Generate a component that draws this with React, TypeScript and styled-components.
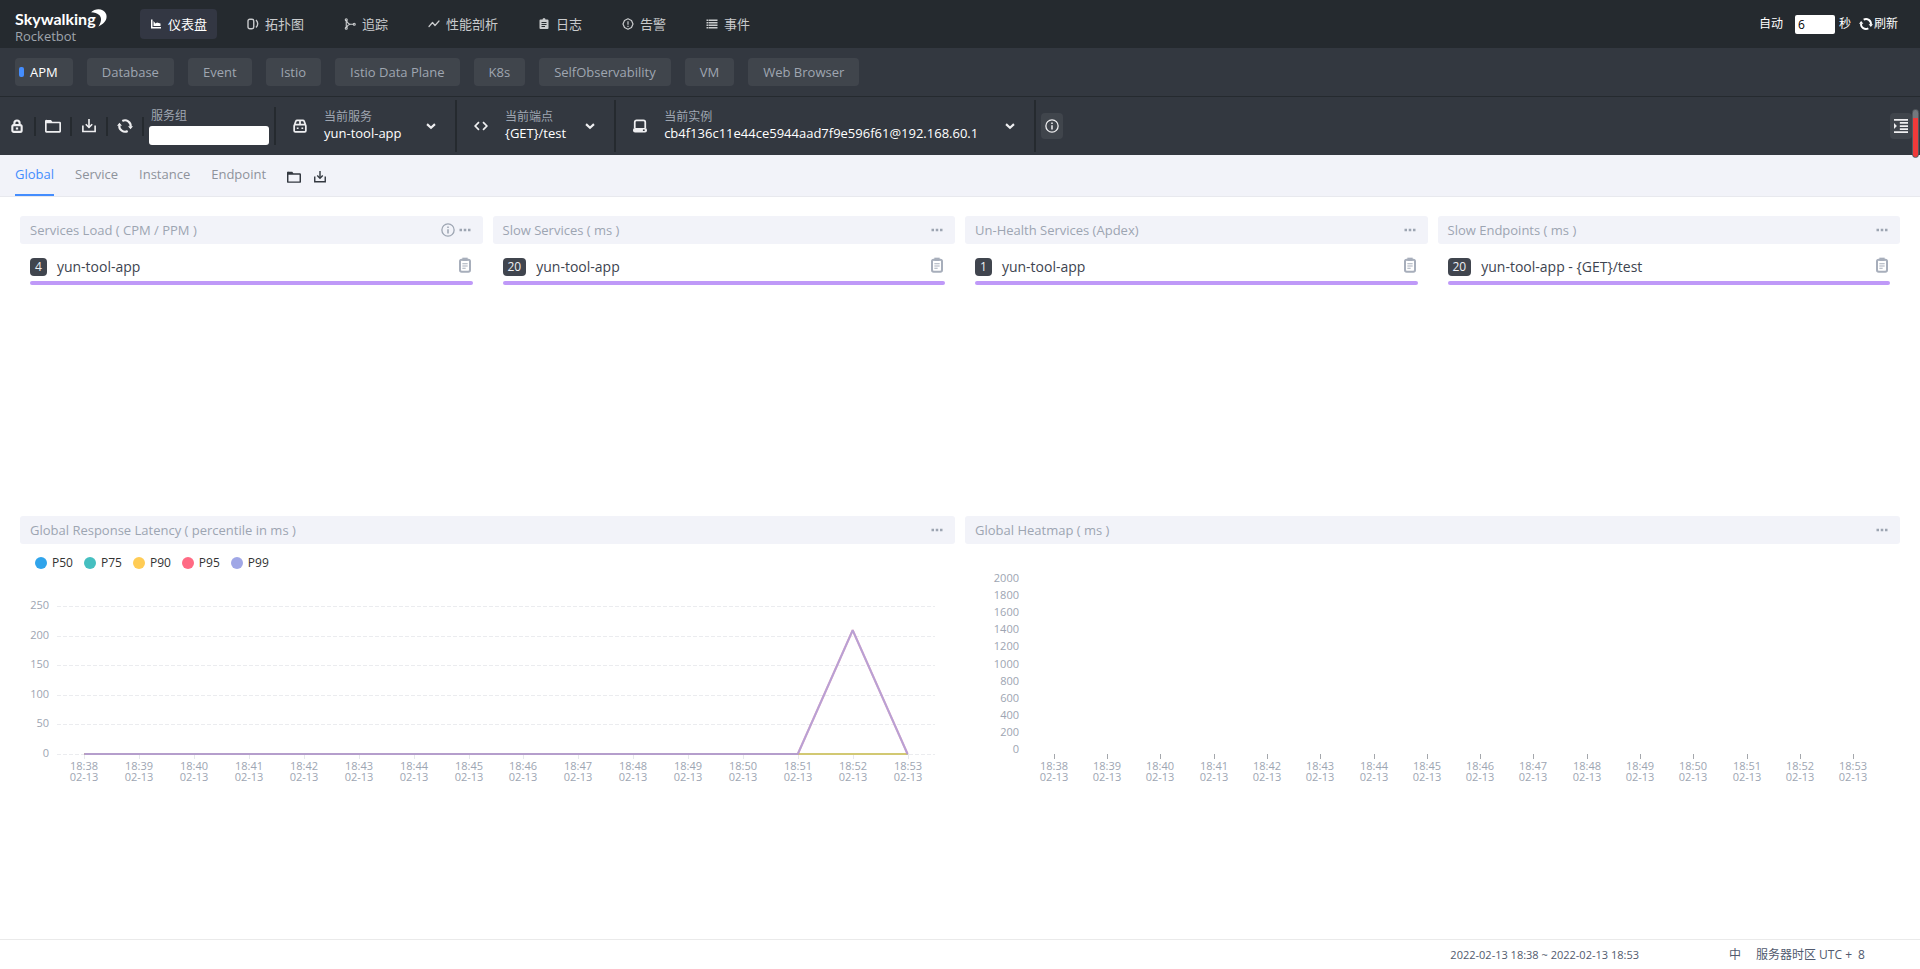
import React, { useLayoutEffect, useRef, useState } from 'react';
import styled, { createGlobalStyle } from 'styled-components';

const GlobalStyle = createGlobalStyle`
  *, *::before, *::after { box-sizing: border-box; }
  body {
    margin: 0;
    background: #fff;
    color: #3d444f;
    font-family: 'Open Sans', 'Noto Sans CJK SC', sans-serif;
    font-size: 13px;
    line-height: 18px;
  }
  button, input { font: inherit; color: inherit; }
  button { border: 0; padding: 0; background: none; cursor: pointer; }
  a { color: inherit; text-decoration: none; }
  svg { display: block; flex: none; }
`;

const Page = styled.div`
  display: flex;
  flex-direction: column;
  min-height: 100vh;
`;

/* ---------- icons ---------- */

type IconName =
  | 'chart' | 'topology' | 'trace' | 'timeline' | 'clipboard' | 'issue' | 'list'
  | 'lock' | 'folder' | 'save' | 'retry' | 'package' | 'code' | 'disk'
  | 'chevron' | 'info' | 'indent' | 'clipboardOutline' | 'more';

const shapes: Record<IconName, React.ReactNode> = {
  chart: <path d="M2 3h3v15h17v3H2zM7 16V6l4 5 3-2 7 2v5z" fill="currentColor" />,
  topology: (
    <g fill="none" stroke="currentColor" strokeWidth="2.8">
      <rect x="2" y="2.500" width="11.500" height="19" rx="3.500" />
      <path d="M18 4c4.500 4 4.500 10.500 0 15" />
    </g>
  ),
  trace: (
    <g fill="none" stroke="currentColor" strokeWidth="2.2">
      <path d="M4.500 4v16M5 5c2 5 4 7.500 8 7.500h6M13 12.500c-4 0-6 2-8 6.500" />
      <circle cx="4.500" cy="3.500" r="2" />
      <circle cx="4.500" cy="20.500" r="2" />
      <circle cx="20.500" cy="12.500" r="2" />
    </g>
  ),
  timeline: (
    <path
      d="M2 17l7-8 5 6 8-9"
      fill="none"
      stroke="currentColor"
      strokeWidth="2.400"
      strokeLinejoin="round"
      strokeLinecap="round"
    />
  ),
  clipboard: (
    <path
      fill="currentColor"
      fillRule="evenodd"
      d="M19 3h-4a3 3 0 0 0-6 0H5a2 2 0 0 0-2 2v15a2 2 0 0 0 2 2h14a2 2 0 0 0 2-2V5a2 2 0 0 0-2-2zM7 8h10v2H7zm0 4h10v2H7zm0 4h7v2H7z"
    />
  ),
  issue: (
    <g fill="none" stroke="currentColor" strokeWidth="2.400">
      <path d="M12 1.500l7 3.500 3 7-3 7-7 3.500L5 19l-3-7 3-7z" strokeLinejoin="round" />
      <path d="M12 6.500v7M12 15.500v2.500" />
    </g>
  ),
  list: <path fill="currentColor" d="M1 3h3v3H1zm4 0h18v3H5zM1 8h3v3H1zm4 0h18v3H5zM1 13h3v3H1zm4 0h18v3H5zM1 18h3v3H1zm4 0h18v3H5z" />,
  lock: (
    <g fill="none" stroke="currentColor" strokeWidth="3.600">
      <rect x="4" y="10.500" width="16" height="11.500" rx="2.500" />
      <path d="M7.500 10.500V7a4.500 4.500 0 0 1 9 0v3.500" />
      <path d="M10 16.300h4" />
    </g>
  ),
  folder: (
    <path
      fill="currentColor"
      fillRule="evenodd"
      d="M3 3h6l2 2.500h11a2 2 0 0 1 2 2V20a2 2 0 0 1-2 2H2a2 2 0 0 1-2-2V5a2 2 0 0 1 3-2zM2.500 8v11.500h19V8z"
    />
  ),
  save: (
    <g fill="none" stroke="currentColor" strokeWidth="2.800">
      <path d="M1.500 11v10.500h21V11" />
      <path d="M12 0v14" />
      <path d="M6.500 9l5.500 5.500L17.500 9" />
    </g>
  ),
  retry: (
    <g fill="none" stroke="currentColor" strokeWidth="3.200">
      <path d="M8 4.500A8.500 8.500 0 0 1 20.500 13M16 19.500A8.500 8.500 0 0 1 3.500 11" />
      <path d="M16.500 12.500H24L20.300 17zM0 11.500h7.500L3.700 7z" fill="currentColor" stroke="none" />
    </g>
  ),
  package: (
    <g fill="none" stroke="currentColor" strokeWidth="3">
      <rect x="2" y="9.500" width="20" height="12.500" rx="2" />
      <path d="M3 9l2-5.500Q5.500 2.500 7 2.500h10q1.500 0 2 1L21 9M12 2v7M8 14.500V17M16 14.500V17" />
    </g>
  ),
  code: <path d="M8.500 5.500L2 12l6.500 6.500M15.500 5.500L22 12l-6.500 6.500" fill="none" stroke="currentColor" strokeWidth="3" />,
  disk: (
    <g fill="none" stroke="currentColor" strokeWidth="3">
      <path d="M3 16V5.500a3 3 0 0 1 3-3h12a3 3 0 0 1 3 3V16" />
      <path
        fill="currentColor"
        stroke="none"
        fillRule="evenodd"
        d="M3.500 15.500h17A3.500 3.500 0 0 1 24 19v.5a3.500 3.500 0 0 1-3.500 3.500h-17A3.500 3.500 0 0 1 0 19.500V19a3.500 3.500 0 0 1 3.500-3.500zM17 18v2.500h3V18z"
      />
    </g>
  ),
  chevron: <path d="M2.500 7.500L12 16.500l9.500-9" fill="none" stroke="currentColor" strokeWidth="5" />,
  info: (
    <g fill="none" stroke="currentColor" strokeWidth="2.200">
      <circle cx="12" cy="12" r="10.500" />
      <path d="M12 10.500V18M12 6v2.500" strokeWidth="2.600" />
    </g>
  ),
  indent: <path fill="currentColor" d="M0 0h24v3H0zM10 5.200h14v3H10zM10 10.500h14v3H10zM10 15.800h14v3H10zM0 21h24v3H0zM0 7l5 5-5 5z" />,
  clipboardOutline: (
    <g fill="none" stroke="currentColor">
      <rect x="4.500" y="4" width="15" height="18" rx="2.500" strokeWidth="3" />
      <path d="M8 1h8v5H8z" fill="currentColor" stroke="none" />
      <path d="M8 10h8M8 13.500h8M8 17h5" strokeWidth="1.600" />
    </g>
  ),
  more: <path fill="currentColor" d="M1 9.500h5v5H1zM9.500 9.500h5v5h-5zM18 9.500h5v5h-5z" />,
};

const Icon = ({ name, size = 14 }: { name: IconName; size?: number }) => (
  <svg width={size} height={size} viewBox="0 0 24 24" aria-hidden="true">
    {shapes[name]}
  </svg>
);

/* ---------- header ---------- */

const Header = styled.header`
  display: flex;
  align-items: center;
  height: 48px;
  padding: 0 22px 0 15px;
  background: #252a2f;
  color: #c9cbcd;
`;

const Logo = styled.a`
  display: flex;
  flex-direction: column;
  width: 125px;
  padding-top: 4px;
  color: #9fa5ad;
  line-height: 14px;
`;

const LogoMark = styled.span`
  display: flex;
  align-items: flex-start;
  height: 20px;
  color: #fff;
  font: 700 16px/20px Lato, sans-serif;

  svg { margin-left: -5px; }
`;

const Nav = styled.nav`
  display: flex;
  gap: 20px;
`;

const NavLink = styled.a<{ $active?: boolean }>`
  display: flex;
  align-items: center;
  gap: 6px;
  height: 30px;
  padding: 0 10px;
  border-radius: 4px;
  background: ${(p) => (p.$active ? '#333743' : 'transparent')};
  color: ${(p) => (p.$active ? '#fff' : 'inherit')};
`;

const AutoRefresh = styled.div`
  display: flex;
  align-items: center;
  margin-left: auto;
  color: #fff;
  font-size: 12px;
`;

const SecondsInput = styled.input`
  width: 40px;
  height: 19px;
  margin: 0 4px 0 12px;
  padding: 0 3px;
  border: 0;
  border-radius: 2px;
  background: #fff;
  color: #000;
`;

const RefreshButton = styled.button`
  display: flex;
  align-items: center;
  gap: 1px;
  margin-left: 8px;
`;

const navItems: { icon: IconName; label: string }[] = [
  { icon: 'chart', label: '仪表盘' },
  { icon: 'topology', label: '拓扑图' },
  { icon: 'trace', label: '追踪' },
  { icon: 'timeline', label: '性能剖析' },
  { icon: 'clipboard', label: '日志' },
  { icon: 'issue', label: '告警' },
  { icon: 'list', label: '事件' },
];

/* ---------- template groups ---------- */

const GroupBar = styled.div`
  display: flex;
  align-items: center;
  gap: 14px;
  height: 49px;
  padding: 0 15px;
  border-bottom: 1px solid #252a2f;
  background: #333840;
`;

const GroupButton = styled.button<{ $active?: boolean }>`
  position: relative;
  height: 28px;
  padding: 0 15px;
  border-radius: 4px;
  background: #40454c;
  color: ${(p) => (p.$active ? '#fff' : '#9fa6b1')};
  ${(p) =>
    p.$active &&
    `&::before {
      content: '';
      position: absolute;
      left: 4px;
      top: 9px;
      width: 5px;
      height: 10px;
      border-radius: 2px;
      background: #448dfe;
    }`}
`;

const groups = ['APM', 'Database', 'Event', 'Istio', 'Istio Data Plane', 'K8s', 'SelfObservability', 'VM', 'Web Browser'];

/* ---------- tool bar ---------- */

const ToolBar = styled.div`
  position: relative;
  display: flex;
  align-items: center;
  height: 58px;
  background: #333840;
  color: #efeff1;
`;

const ToolButton = styled.button`
  display: flex;
  align-items: center;
  justify-content: center;
  width: 36px;
  height: 19px;
  border-right: 2px solid #252a2f;
`;

const GroupField = styled.label`
  display: flex;
  flex-direction: column;
  gap: 1px;
  height: 38px;
  padding: 0 5px;
  border-right: 2px solid #252a2f;
  color: #9fa6b1;
  font-size: 12px;
  line-height: 18px;

  span { padding-left: 2px; }
`;

const GroupInput = styled.input`
  width: 120px;
  height: 20px;
  padding: 0 4px;
  border: 0;
  border-radius: 3px;
  background: #fff;
  color: #333;
`;

const Selector = styled.button`
  display: flex;
  align-items: center;
  height: 52px;
  padding: 0 19px 0 17px;
  border-right: 2px solid #252a2f;
  text-align: left;
`;

const SelectorText = styled.span<{ $min: number }>`
  display: flex;
  flex-direction: column;
  min-width: ${(p) => p.$min}px;
  margin: 0 19px 3px 17px;
  color: #fff;
  line-height: 16px;

  small {
    color: #9fa6b1;
    font-size: 12px;
  }
`;

const ToolChip = styled.button<{ $end?: boolean }>`
  display: flex;
  align-items: center;
  justify-content: center;
  width: 22px;
  height: 26px;
  border-radius: 4px;
  background: #40454c;
  margin-left: ${(p) => (p.$end ? 'auto' : '5px')};
  margin-right: ${(p) => (p.$end ? '8px' : '0')};
`;

const ScrollMark = styled.div`
  position: absolute;
  right: 1px;
  top: 12px;
  width: 7px;
  height: 49px;
  border: 1px solid #55595f;
  border-radius: 4px;
  background: linear-gradient(#74787e 8px, #f03a3a 8px);
`;

const selectors: { icon: IconName; label: string; value: string; min: number }[] = [
  { icon: 'package', label: '当前服务', value: 'yun-tool-app', min: 83 },
  { icon: 'code', label: '当前端点', value: '{GET}/test', min: 61 },
  { icon: 'disk', label: '当前实例', value: 'cb4f136c11e44ce5944aad7f9e596f61@192.168.60.1', min: 322 },
];

/* ---------- scope tabs ---------- */

const TabBar = styled.div`
  display: flex;
  align-items: center;
  gap: 21px;
  height: 42px;
  padding: 0 15px;
  border-bottom: 1px solid #e8e9ee;
  background: #f2f3f9;
  color: #333840;
`;

const Tab = styled.button<{ $active?: boolean }>`
  height: 41px;
  padding-bottom: 2px;
  border-bottom: 2px solid ${(p) => (p.$active ? '#448dfe' : 'transparent')};
  color: ${(p) => (p.$active ? '#448dfe' : '#8e929b')};
`;

const TabTools = styled.div`
  display: flex;
  gap: 13px;
  padding-top: 2px;
`;

/* ---------- dashboard ---------- */

const Dashboard = styled.main`
  flex: 1;
  display: grid;
  grid-template-columns: repeat(4, minmax(0, 1fr));
  grid-template-rows: 290px 290px;
  gap: 10px;
  padding: 19px 20px 0;
`;

const Panel = styled.section<{ $span?: number }>`
  display: flex;
  flex-direction: column;
  grid-column: span ${(p) => p.$span ?? 1};
`;

const PanelHead = styled.div`
  display: flex;
  align-items: center;
  gap: 4px;
  height: 28px;
  padding: 0 12px 0 10px;
  border-radius: 3px;
  background: #f2f3f9;
  color: #9da5b2;

  h2 {
    flex: 1;
    margin: 0;
    font-size: 13px;
    font-weight: 400;
  }
`;

const RankItem = styled.div`
  display: flex;
  align-items: center;
  gap: 10px;
  height: 28px;
  margin: 9px 10px 0;
`;

const Badge = styled.span`
  padding: 0 5px;
  border-radius: 4px;
  background: #40454e;
  color: #eef0f4;
  font-size: 12px;
`;

const RankName = styled.span`
  flex: 1;
  font-size: 14px;
`;

const CopyButton = styled.button`
  padding-bottom: 4px;
  color: #a7aebb;
`;

const Bar = styled.div`
  height: 4px;
  margin: 0 10px;
  border-radius: 2px;
  background: #bf99f8;
`;

type Rank = { title: string; value: string; name: string; info?: boolean };

const ranks: Rank[] = [
  { title: 'Services Load ( CPM / PPM )', value: '4', name: 'yun-tool-app', info: true },
  { title: 'Slow Services ( ms )', value: '20', name: 'yun-tool-app' },
  { title: 'Un-Health Services (Apdex)', value: '1', name: 'yun-tool-app' },
  { title: 'Slow Endpoints ( ms )', value: '20', name: 'yun-tool-app - {GET}/test' },
];

const PanelHeading = ({ title, info }: { title: string; info?: boolean }) => (
  <PanelHead>
    <h2>{title}</h2>
    {info && <button aria-label="Details"><Icon name="info" /></button>}
    <button aria-label="More"><Icon name="more" size={12} /></button>
  </PanelHead>
);

/* ---------- charts ---------- */

const Legend = styled.ul`
  display: flex;
  gap: 11px;
  height: 24px;
  margin: 7px 0 0;
  padding: 0 15px;
  list-style: none;
  color: #333;
  font-size: 12px;
  line-height: 24px;
`;

const LegendItem = styled.li<{ $color: string }>`
  display: flex;
  align-items: center;
  gap: 5px;

  &::before {
    content: '';
    width: 12px;
    height: 12px;
    border-radius: 50%;
    background: ${(p) => p.$color};
  }
`;

const Plot = styled.div<{ $tall?: boolean }>`
  height: ${(p) => (p.$tall ? '252px' : '221px')};

  svg { width: 100%; height: 100%; }
  text {
    fill: #9da5b2;
    font-size: 11px;
  }
`;

const minutes = Array.from({ length: 16 }, (_, i) => `18:${38 + i}`);

const usePlotWidth = () => {
  const ref = useRef<HTMLDivElement>(null);
  const [width, setWidth] = useState(935);
  useLayoutEffect(() => {
    const node = ref.current;
    if (!node) return;
    const measure = () => setWidth(node.clientWidth);
    measure();
    const observer = new ResizeObserver(measure);
    observer.observe(node);
    return () => observer.disconnect();
  }, []);
  return { ref, width };
};

const TimeAxis = ({ left, right, y, color }: { left: number; right: number; y: number; color: string }) => {
  const step = (right - left) / minutes.length;
  return (
    <g textAnchor="middle">
      {minutes.map((m, i) => {
        const x = Math.round(left + step * (i + 0.5));
        return (
          <g key={m}>
            <path d={`M${x + 0.5} ${y}v5`} stroke={color} />
            <text x={x} y={y + 16}>{m}</text>
            <text x={x} y={y + 27}>02-13</text>
          </g>
        );
      })}
    </g>
  );
};

const series = [
  { name: 'P50', color: '#30a4eb', peak: 0 },
  { name: 'P75', color: '#45bfc0', peak: 0 },
  { name: 'P90', color: '#ffcc55', peak: 0 },
  { name: 'P95', color: '#ff6a84', peak: 209 },
  { name: 'P99', color: '#a0a7e6', peak: 209 },
];

const LatencyChart = () => {
  const { ref, width } = usePlotWidth();
  const left = 37;
  const right = width - 20;
  const top = 31;
  const base = 179;
  const step = (right - left) / minutes.length;
  const yOf = (v: number) => base - (v / 250) * (base - top);
  return (
    <>
      <Legend>
        {series.map((s) => (
          <LegendItem key={s.name} $color={s.color}>{s.name}</LegendItem>
        ))}
      </Legend>
      <Plot ref={ref}>
        <svg role="img" aria-label="Global response latency">
          {[0, 50, 100, 150, 200, 250].map((v) => (
            <g key={v}>
              <path d={`M${left} ${Math.round(yOf(v)) + 0.5}H${right}`} stroke="#ebecef" strokeDasharray="4 2" />
              <text x={left - 8} y={Math.round(yOf(v)) + 3} textAnchor="end">{v}</text>
            </g>
          ))}
          <TimeAxis left={left} right={right} y={base} color="#e6e8ec" />
          {series.map((s) => (
            <polyline
              key={s.name}
              fill="none"
              stroke={s.color}
              strokeWidth="2"
              strokeOpacity="0.75"
              strokeLinejoin="bevel"
              points={minutes.map((_, i) => `${left + step * (i + 0.5)},${yOf(i === 14 ? s.peak : 0)}`).join(' ')}
            />
          ))}
        </svg>
      </Plot>
    </>
  );
};

const HeatmapChart = () => {
  const { ref, width } = usePlotWidth();
  const base = 210;
  return (
    <Plot ref={ref} $tall>
      <svg role="img" aria-label="Global heatmap">
        {Array.from({ length: 11 }, (_, i) => (
          <text key={i} x={54} y={Math.round(209 - i * 17.1)} textAnchor="end">{i * 200}</text>
        ))}
        <TimeAxis left={62} right={width - 20} y={base} color="#a4a7ac" />
      </svg>
    </Plot>
  );
};

/* ---------- footer ---------- */

const Footer = styled.footer`
  display: flex;
  align-items: center;
  justify-content: flex-end;
  height: 30px;
  padding-right: 53px;
  border-top: 1px solid #eaeaea;
  color: #515a6e;
  font-size: 12px;
`;

const TimeRange = styled.button`
  margin-right: 90px;
  font-size: 11px;
`;

const Language = styled.button`
  margin-right: 15px;
`;

const Offset = styled.input`
  width: 9px;
  padding: 0;
  border: 0;
  background: none;
`;

const Zone = styled.label`
  display: flex;
  gap: 6px;
`;

export default function App() {
  return (
    <Page>
      <GlobalStyle />
      <Header>
        <Logo href="#">
          <LogoMark>
            Skywalking
            <svg width="16" height="18" viewBox="0 0 15 17" aria-hidden="true">
              <path d="M0 3C4-1 12-1 14.300 5c1.500 5-2 9-7.300 11.500C10 12 10 8.500 8 6 6 3.800 3 3.200 0 3z" fill="#fff" />
            </svg>
          </LogoMark>
          Rocketbot
        </Logo>
        <Nav>
          {navItems.map((n, i) => (
            <NavLink key={n.label} href="#" $active={i === 0}>
              <Icon name={n.icon} size={12} />
              {n.label}
            </NavLink>
          ))}
        </Nav>
        <AutoRefresh>
          <label htmlFor="seconds">自动</label>
          <SecondsInput id="seconds" defaultValue="6" />
          秒
          <RefreshButton>
            <Icon name="retry" />
            刷新
          </RefreshButton>
        </AutoRefresh>
      </Header>

      <GroupBar>
        {groups.map((g, i) => (
          <GroupButton key={g} $active={i === 0}>{g}</GroupButton>
        ))}
      </GroupBar>

      <ToolBar>
        <ToolButton aria-label="Lock"><Icon name="lock" /></ToolButton>
        <ToolButton aria-label="Open"><Icon name="folder" size={16} /></ToolButton>
        <ToolButton aria-label="Save"><Icon name="save" /></ToolButton>
        <ToolButton aria-label="Reload"><Icon name="retry" size={16} /></ToolButton>
        <GroupField>
          <span>服务组</span>
          <GroupInput />
        </GroupField>
        {selectors.map((s) => (
          <Selector key={s.label}>
            <Icon name={s.icon} />
            <SelectorText $min={s.min}>
              <small>{s.label}</small>
              {s.value}
            </SelectorText>
            <Icon name="chevron" size={10} />
          </Selector>
        ))}
        <ToolChip aria-label="Information"><Icon name="info" /></ToolChip>
        <ToolChip aria-label="Toggle panel" $end><Icon name="indent" /></ToolChip>
        <ScrollMark />
      </ToolBar>

      <TabBar>
        {['Global', 'Service', 'Instance', 'Endpoint'].map((t, i) => (
          <Tab key={t} $active={i === 0}>{t}</Tab>
        ))}
        <TabTools>
          <button aria-label="Open tab"><Icon name="folder" /></button>
          <button aria-label="Save tab"><Icon name="save" size={12} /></button>
        </TabTools>
      </TabBar>

      <Dashboard>
        {ranks.map((r) => (
          <Panel key={r.title}>
            <PanelHeading title={r.title} info={r.info} />
            <RankItem>
              <Badge>{r.value}</Badge>
              <RankName>{r.name}</RankName>
              <CopyButton aria-label="Copy"><Icon name="clipboardOutline" size={16} /></CopyButton>
            </RankItem>
            <Bar />
          </Panel>
        ))}
        <Panel $span={2}>
          <PanelHeading title="Global Response Latency ( percentile in ms )" />
          <LatencyChart />
        </Panel>
        <Panel $span={2}>
          <PanelHeading title="Global Heatmap ( ms )" />
          <HeatmapChart />
        </Panel>
      </Dashboard>

      <Footer>
        <TimeRange>2022-02-13 18:38 ~ 2022-02-13 18:53</TimeRange>
        <Language>中</Language>
        <Zone>
          服务器时区 UTC +
          <Offset defaultValue="8" />
        </Zone>
      </Footer>
    </Page>
  );
}
